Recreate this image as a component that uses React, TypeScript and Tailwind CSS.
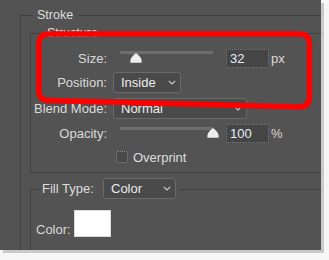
import React from "react";

const LINE = "border-[#414141]";
const LBG = "bg-[#414141]";

function Chevron() {
  return (
    <svg width="8" height="5" viewBox="0 0 8 5" className="block">
      <path d="M0.8 0.8 L4 4 L7.2 0.8" fill="none" stroke="#cfcfcf" strokeWidth="1.1" />
    </svg>
  );
}

function Thumb() {
  return (
    <svg width="12" height="10" viewBox="0 0 12 10" className="block">
      <path
        d="M6 0.3 C7.2 0.3 11.6 5 11.6 7.6 L11.6 9.7 L0.4 9.7 L0.4 7.6 C0.4 5 4.8 0.3 6 0.3 Z"
        fill="#ededed"
      />
    </svg>
  );
}

function NumInput({ value }: { value: string }) {
  return (
    <div className="flex h-[19px] w-[43px] items-center border border-dotted border-[#7a7a7a] bg-[#454545] pl-[3px] text-[13px] text-[#e6eefb]">
      {value}
    </div>
  );
}

function Select({ value, w }: { value: string; w: string }) {
  return (
    <div
      className={`${w} flex h-[21px] items-center justify-between rounded-[3px] border border-[#6a6a6a] bg-[#4a4a4a] pl-[7px] pr-[4px] text-[13px] text-[#ececec]`}
    >
      <span>{value}</span>
      <Chevron />
    </div>
  );
}

function Label({ children }: { children: React.ReactNode }) {
  return <div className="w-[76px] text-right text-[13px] text-[#dadada]">{children}</div>;
}

export default function App() {
  return (
    <div
      className="relative h-[260px] w-[329px] overflow-hidden bg-[#f6f6f6]"
      style={{ fontFamily: '"Liberation Sans", Arial, sans-serif' }}
    >
      <div className="flex h-[250px] w-[321px] flex-col overflow-hidden bg-[#535353] pl-[20px] pt-[9px] leading-none shadow-[3px_3px_0_#c9c9c9]">
        {/* Stroke header */}
        <div className="flex h-[13px] w-[320px] shrink-0 items-center">
          <div className={`h-[7px] w-[13px] self-end border-l border-t ${LINE}`} />
          <span className="ml-[4px] text-[12.5px] text-[#dedede]">Stroke</span>
          <div className={`ml-[6px] h-px flex-1 ${LBG}`} />
        </div>
        {/* Stroke body */}
        <div className={`flex flex-1 flex-col border-l ${LINE} pl-[9px] pt-[5px]`}>
          {/* Structure header */}
          <div className="flex h-[13px] shrink-0 items-center">
            <div className={`h-[7px] w-[14px] self-end border-l border-t ${LINE}`} />
            <span className="ml-[3px] text-[12.5px] text-[#dedede]">Structure</span>
            <div className={`ml-[5px] h-px flex-1 ${LBG}`} />
          </div>
          {/* Structure body */}
          <div className={`flex flex-col border-b border-l ${LINE} pb-[7px]`}>
            {/* Size */}
            <div className="mt-[8px] flex h-[21px] items-center">
              <Label>Size:</Label>
              <div className="relative ml-[6px] w-[113px] self-stretch">
                <div className="ml-[7px] mt-[3px] h-[3px] w-[93px] bg-[#6c6c6c]" />
                <div className="absolute left-[17px] top-[5px]">
                  <Thumb />
                </div>
              </div>
              <NumInput value="32" />
              <span className="ml-[2px] text-[13px] text-[#dadada]">px</span>
            </div>
            {/* Position */}
            <div className="mt-[3px] flex h-[21px] items-center">
              <Label>Position:</Label>
              <div className="ml-[6px]">
                <Select value="Inside" w="w-[68px]" />
              </div>
            </div>
            {/* Blend Mode */}
            <div className="mt-[5px] flex h-[21px] items-center">
              <Label>Blend Mode:</Label>
              <div className="ml-[6px]">
                <Select value="Normal" w="w-[134px]" />
              </div>
            </div>
            {/* Opacity */}
            <div className="mt-[4px] flex h-[21px] items-center">
              <Label>Opacity:</Label>
              <div className="relative ml-[6px] w-[113px] self-stretch">
                <div className="ml-[7px] mt-[4px] h-[3px] w-[93px] bg-[#6c6c6c]" />
                <div className="absolute left-[94px] top-[5px]">
                  <Thumb />
                </div>
              </div>
              <NumInput value="100" />
              <span className="ml-[2px] text-[13px] text-[#dadada]">%</span>
            </div>
            {/* Overprint */}
            <div className="mt-[5px] flex h-[16px] items-center pl-[85px]">
              <div className="h-[12px] w-[12px] rounded-[2px] border border-dotted border-[#8a8a8a] bg-[#4a4a4a]" />
              <span className="ml-[5px] text-[13px] text-[#dedede]">Overprint</span>
            </div>
          </div>
          {/* Fill group */}
          <div className="mt-[5px] flex flex-1 flex-col">
            <div className="flex h-[21px] shrink-0">
              <div className={`h-[10px] w-[11px] self-end border-l border-t ${LINE}`} />
              <span className="ml-[1px] w-[55px] self-center text-[13px] text-[#dedede]">Fill Type:</span>
              <div className="ml-[6px]">
                <Select value="Color" w="w-[73px]" />
              </div>
              <div className={`ml-[3px] mt-[11px] h-px flex-1 ${LBG}`} />
            </div>
            <div className={`flex-1 border-l ${LINE} pl-[5px] pt-[11px]`}>
              <div className="flex items-end">
                <span className="mb-[1px] text-[13px] text-[#dadada]">Color:</span>
                <div className="ml-[3px] h-[27px] w-[37px] border border-[#dadada] bg-white" />
              </div>
            </div>
          </div>
        </div>
      </div>
      {/* red annotation */}
      <svg
        className="pointer-events-none absolute left-0 top-0"
        width="329"
        height="260"
        viewBox="0 0 329 260"
      >
        <path
          d="M49 34 L299.5 34 Q309.5 34 309.5 44 L309.5 97 Q309.5 107 299.5 107 L49 100.5 Q39 100.5 39 90.5 L39 44 Q39 34 49 34 Z"
          fill="none"
          stroke="#ff0000"
          strokeWidth="5.5"
        />
      </svg>
    </div>
  );
}
